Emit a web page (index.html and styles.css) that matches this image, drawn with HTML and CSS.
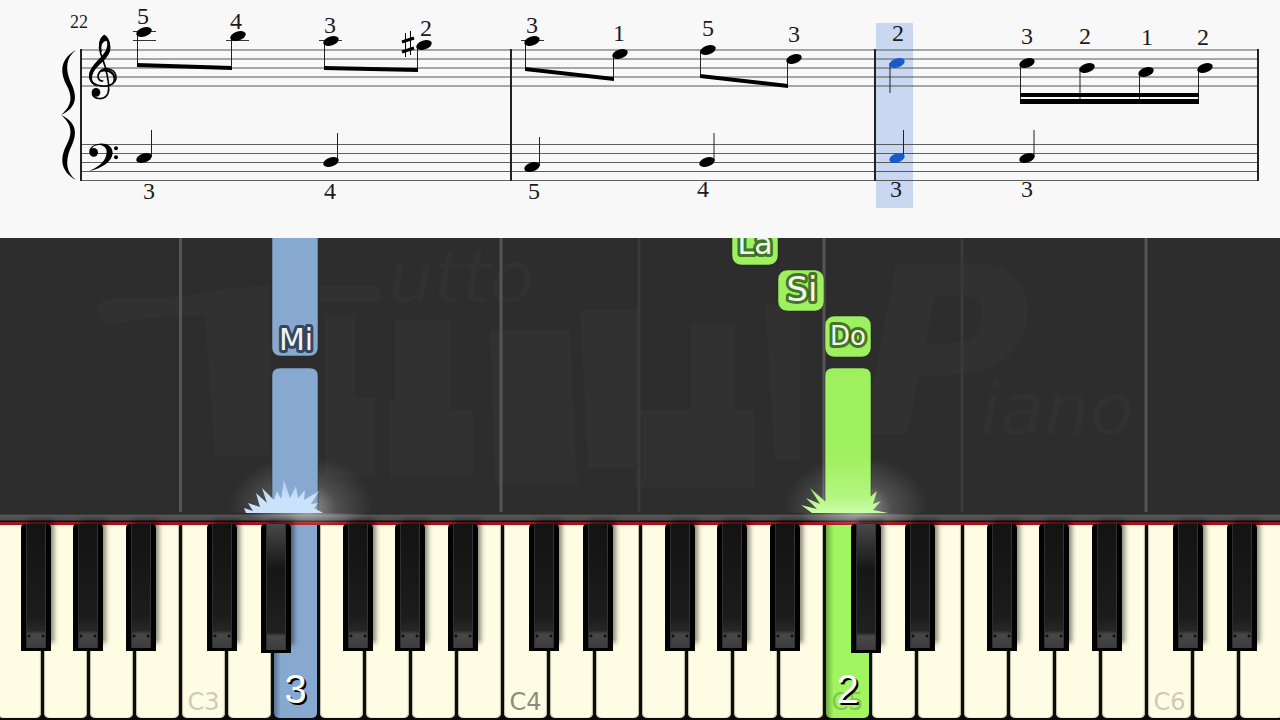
FILE: index.html
```html
<!DOCTYPE html>
<html lang="it">
<head>
<meta charset="utf-8">
<title>Tutto Piano</title>
<link rel="stylesheet" href="styles.css">
</head>
<body>
<main class="player">
<svg class="score" viewBox="0 0 1280 238" role="img" aria-label="Score, measure 22">
  <defs>
    <ellipse id="head" rx="8" ry="4.500" transform="rotate(-18)"/>
  </defs>
  <rect class="cursor" x="876" y="23" width="37" height="185"/>
  <path class="staff-treble" d="M80 50H1258M80 59H1258M80 68H1258M80 77H1258M80 86H1258"/>
  <path class="staff-bass" d="M80 144.500H1258M80 153.500H1258M80 162.500H1258M80 171.500H1258M80 180.500H1258"/>
  <path class="barline" d="M81 49V181M511 49V181M875 49V181M1258 49V181"/>
  <g transform="translate(50 10) scale(.33333)">
    <path d="M78 120C48 142 46 175 60 212C82 255 85 290 33 315C85 340 82 375 60 418C46 455 48 488 78 510C34 485 28 450 48 408C68 372 68 345 33 315C68 285 68 258 48 222C28 180 34 145 78 120Z"/>
    <circle cx="138" cy="247" r="13"/>
    <path class="clef-line" d="M127 252C132 268 164 273 174 250C181 230 173 200 166 172L152 130C145 106 150 86 163 77C177 86 182 108 175 125C160 155 120 170 120 200C121 234 190 240 198 206C200 176 164 168 149 186C138 202 147 214 160 213"/>
    <path d="M163 74C147 84 145 108 151 128L156 124C151 108 157 94 169 92C173 94 173 108 168 120C156 145 116 168 117 200C119 218 130 226 142 230C128 220 124 208 127 196C134 168 170 155 180 124C186 100 172 84 163 74Z"/>
    <path d="M149 187C160 170 193 177 196 203C196 216 188 224 178 228C192 218 193 205 187 195C178 183 160 182 149 187Z"/>
    <circle cx="131" cy="427" r="13"/>
    <path d="M118 425C118 396 188 388 188 429C186 456 154 475 117 484C150 468 169 452 170 426C170 402 137 399 126 415Z"/>
    <circle cx="198" cy="415" r="6"/><circle cx="198" cy="442" r="6"/>
  </g>
  <path class="ledger" d="M133 31.500H156M133 40.500H156M226 40.500H249M319 40.500H342M521 40.500H544"/>
  <path class="stem" d="M137.500 32V66M231.500 36V69M324.500 41V68M417.500 45V71M525.500 41V70M613.500 54V80M700.500 50V77M787.500 59V87M1020.500 63V102M1080 68V102M1139.500 72V102M1198.500 68V102M151.500 130V157M337.500 133V161M539.500 137V166M714 133V161M1034 130V157M903.500 130V157M890 63V93"/>
  <path d="M137 63L232 66V70L137 67ZM324 66L418 68V72L324 70ZM525 67L614 77V81L525 71ZM700 74L788 84V88L700 78ZM1020 93H1199V97H1020ZM1020 99H1199V104H1020Z"/>
  <path class="sharp-v" d="M405.500 33V57M410.500 31V55"/>
  <path class="sharp-h" d="M402 42L414 38M402 52L414 48"/>
  <g>
    <use href="#head" x="144" y="32"/><use href="#head" x="238" y="36"/><use href="#head" x="331" y="41"/><use href="#head" x="424" y="45"/>
    <use href="#head" x="532" y="41"/><use href="#head" x="620" y="54"/><use href="#head" x="708" y="50"/><use href="#head" x="794" y="59"/>
    <use href="#head" x="1027" y="63"/><use href="#head" x="1087" y="68"/><use href="#head" x="1146" y="72"/><use href="#head" x="1205" y="68"/>
    <use href="#head" x="144" y="158"/><use href="#head" x="331" y="162"/><use href="#head" x="532" y="167"/><use href="#head" x="707" y="162"/><use href="#head" x="1027" y="158"/>
  </g>
  <g class="current"><use href="#head" x="897" y="63"/><use href="#head" x="897" y="158"/></g>
  <text class="measure" x="79" y="28">22</text>
  <g class="finger">
    <text x="143" y="24">5</text><text x="236" y="29">4</text><text x="330" y="33">3</text><text x="426" y="36">2</text>
    <text x="532" y="33">3</text><text x="619" y="41">1</text><text x="708" y="36">5</text><text x="794" y="42">3</text>
    <text x="898" y="41">2</text><text x="1027" y="44">3</text><text x="1085" y="44">2</text><text x="1147" y="45">1</text><text x="1203" y="45">2</text>
    <text x="149" y="199">3</text><text x="330" y="199">4</text><text x="534" y="199">5</text><text x="703" y="197">4</text><text x="896" y="197">3</text><text x="1027" y="197">3</text>
  </g>
</svg>

<svg class="roll" viewBox="0 238 1280 275" role="img" aria-label="Falling notes">
  <defs>
    <radialGradient id="glow"><stop offset="0" stop-color="#fff" stop-opacity=".6"/><stop offset=".5" stop-color="#fff" stop-opacity=".16"/><stop offset="1" stop-color="#fff" stop-opacity="0"/></radialGradient>
    <linearGradient id="burstBlue" x1="0" y1="0" x2="0" y2="1"><stop offset="0" stop-color="#a9cdf0"/><stop offset=".6" stop-color="#cbe2fb"/></linearGradient>
    <linearGradient id="burstGreen" x1="0" y1="0" x2="0" y2="1"><stop offset="0" stop-color="#a6f070"/><stop offset="1" stop-color="#ccffa8"/></linearGradient>
    <linearGradient id="laneGreen" x1="0" y1="0" x2="0" y2="1"><stop offset=".6" stop-color="#9ff05f"/><stop offset="1" stop-color="#bcfa8c"/></linearGradient>
  </defs>
  <g class="watermark">
    <path d="M98 306Q100 298 125 298Q185 300 225 288L270 286V320Q180 310 108 325Q98 320 98 306ZM320 286H375Q384 290 380 302H320ZM205 315H270V455H215ZM325 315H355V398H375V477H325ZM395 320H450V410H473V477H390V400H395ZM490 330H570L577 485H495ZM580 310H639V468H588ZM691 325H735V410H754V487H635V410H691ZM765 305H800V460H775Z"/>
    <text class="mark-word" x="388" y="302">utto</text>
    <text class="mark-initial" x="858" y="435">P</text>
    <text class="mark-word" x="980" y="434">iano</text>
  </g>
  <path class="octave" d="M180.500 238V512M501 238V512M824 238V512M1146 238V512"/>
  <path class="octave-faint" d="M639 238V512M962 238V512"/>
  <ellipse cx="301" cy="508" rx="72" ry="52" fill="url(#glow)"/>
  <ellipse cx="856" cy="508" rx="72" ry="52" fill="url(#glow)"/>
  <g class="note left">
    <rect x="272" y="228" width="46" height="128" rx="8"/>
    <path d="M272 513V376Q272 368 280 368H310Q318 368 318 376V513Z"/>
  </g>
  <g class="note right">
    <rect x="732" y="224" width="46" height="41" rx="9"/>
    <rect x="778" y="270" width="46" height="41" rx="9"/>
    <rect x="825" y="316" width="46" height="41" rx="9"/>
    <path fill="url(#laneGreen)" d="M825 513V376Q825 368 833 368H863Q871 368 871 376V513Z"/>
  </g>
  <path fill="url(#burstBlue)" d="M246 513L244 508L253 511L248 503L260 507L256 493L267 503L262 488L274 500L277 491L281 499L284 480L290 498L296 486L298 498L305 490L304 500L319 491L311 504L318 503L314 508L323 513Z"/>
  <path fill="url(#burstGreen)" d="M812 513L801 505L817 509L806 498L820 504L810 488L826 502L827 496L834 503L839 494L844 502L849 493L854 503L861 495L863 503L877 491L873 504L881 501L873 510L888 513Z"/>
  <g class="solfege">
    <text class="on-blue" x="296" y="350">Mi</text>
    <text x="755" y="254">La</text>
    <text class="large" x="802" y="301">Si</text>
    <text class="small" x="848" y="345">Do</text>
  </g>
</svg>

<div class="rail"></div>

<div class="keyboard">
  <div class="slot"><button class="white" aria-label="F2"></button><button class="black f" aria-label="F♯2"></button></div>
  <div class="slot"><button class="white" aria-label="G2"></button><button class="black g" aria-label="G♯2"></button></div>
  <div class="slot"><button class="white" aria-label="A2"></button><button class="black a" aria-label="A♯2"></button></div>
  <div class="slot"><button class="white" aria-label="B2"></button></div>
  <div class="slot"><button class="white"><span class="name">C3</span></button><button class="black c" aria-label="C♯3"></button></div>
  <div class="slot"><button class="white" aria-label="D3"></button><button class="black d lit" aria-label="D♯3"></button></div>
  <div class="slot"><button class="white held-left"><span class="digit">3</span></button></div>
  <div class="slot"><button class="white" aria-label="F3"></button><button class="black f" aria-label="F♯3"></button></div>
  <div class="slot"><button class="white" aria-label="G3"></button><button class="black g" aria-label="G♯3"></button></div>
  <div class="slot"><button class="white" aria-label="A3"></button><button class="black a" aria-label="A♯3"></button></div>
  <div class="slot"><button class="white" aria-label="B3"></button></div>
  <div class="slot"><button class="white"><span class="name middle">C4</span></button><button class="black c" aria-label="C♯4"></button></div>
  <div class="slot"><button class="white" aria-label="D4"></button><button class="black d" aria-label="D♯4"></button></div>
  <div class="slot"><button class="white" aria-label="E4"></button></div>
  <div class="slot"><button class="white" aria-label="F4"></button><button class="black f" aria-label="F♯4"></button></div>
  <div class="slot"><button class="white" aria-label="G4"></button><button class="black g" aria-label="G♯4"></button></div>
  <div class="slot"><button class="white" aria-label="A4"></button><button class="black a" aria-label="A♯4"></button></div>
  <div class="slot"><button class="white" aria-label="B4"></button></div>
  <div class="slot"><button class="white held-right"><span class="name">C5</span><span class="digit">2</span></button><button class="black c lit" aria-label="C♯5"></button></div>
  <div class="slot"><button class="white" aria-label="D5"></button><button class="black d" aria-label="D♯5"></button></div>
  <div class="slot"><button class="white" aria-label="E5"></button></div>
  <div class="slot"><button class="white" aria-label="F5"></button><button class="black f" aria-label="F♯5"></button></div>
  <div class="slot"><button class="white" aria-label="G5"></button><button class="black g" aria-label="G♯5"></button></div>
  <div class="slot"><button class="white" aria-label="A5"></button><button class="black a" aria-label="A♯5"></button></div>
  <div class="slot"><button class="white" aria-label="B5"></button></div>
  <div class="slot"><button class="white"><span class="name">C6</span></button><button class="black c" aria-label="C♯6"></button></div>
  <div class="slot"><button class="white" aria-label="D6"></button><button class="black d" aria-label="D♯6"></button></div>
  <div class="slot"><button class="white" aria-label="E6"></button></div>
</div>
</main>
</body>
</html>
```

FILE: styles.css
```css
* { box-sizing: border-box; }
body { margin: 0; background: #0b0b0b; }

.player { display: flex; flex-direction: column; min-height: 100vh; overflow: hidden; }
.score, .roll { display: block; width: 100%; height: auto; flex: none; }

/* Score */
.score { background: #f8f8f8; }
.cursor { fill: #c9d8f0; }
.staff-treble { stroke: #555; stroke-opacity: .5; stroke-width: 2; }
.staff-bass { stroke: #444; stroke-opacity: .85; stroke-width: 1; }
.barline { stroke: #222; stroke-width: 2; }
.ledger { stroke: #333; stroke-width: 1; }
.stem { stroke: #222; stroke-width: 1; }
.clef-line { fill: none; stroke: #000; stroke-width: 5; }
.sharp-v { stroke: #000; stroke-width: 1; }
.sharp-h { stroke: #000; stroke-width: 3; }
.current { fill: #1959cc; }
.measure, .finger { font-family: "Liberation Serif", serif; fill: #1b1b22; text-anchor: middle; }
.measure { font-size: 18px; }
.finger { font-size: 24px; }

/* Falling notes */
.roll { background: #2d2d2d; }
.watermark { fill: #313131; }
.mark-word, .mark-initial { font-family: "DejaVu Sans", sans-serif; font-style: italic; }
.mark-word { font-size: 72px; }
.mark-initial { font-size: 236px; font-weight: bold; }
.octave { stroke: #555; stroke-width: 3; }
.octave-faint { stroke: #393939; stroke-width: 3; }
.left { fill: #88a9cf; }
.right { fill: #9ff05f; }
.note rect, .note path { stroke: #1d242a; stroke-opacity: .5; stroke-width: 1; }
.solfege { font-family: "DejaVu Sans", sans-serif; font-size: 30px; text-anchor: middle; fill: #f2f6ee; paint-order: stroke; stroke: #32601c; stroke-opacity: .85; stroke-width: 6px; stroke-linejoin: round; }
.solfege .on-blue { stroke: #24364e; }
.solfege .large { font-size: 34px; }
.solfege .small { font-size: 26px; }

/* Rail above the keys */
.rail {
  flex: none;
  height: 12px;
  background:
    radial-gradient(ellipse 60px 14px at 24% 0, #fff8, #fff0),
    radial-gradient(ellipse 60px 14px at 67% 0, #fff8, #fff0),
    linear-gradient(#292929 0 1px, #565656 2px, #4b4b4b 7px, #101010 8px 9px, #a5141c 9px 12px);
}

/* Keyboard */
.keyboard { flex: 1; display: flex; min-height: 195px; margin: 0 -4px; padding-bottom: 2px; background: #0b0b0b; }
.slot { position: relative; flex: 1; display: flex; padding: 0 1px 0 2px; }
button { appearance: none; border: 0; margin: 0; padding: 0; font: inherit; }
.white { flex: 1; min-width: 0; display: grid; align-items: end; justify-items: center; border-radius: 0 0 5px 5px; background: #fefde4; box-shadow: inset 1px 0 1px #b9b8a4, inset -1px 0 1px #b9b8a4; }
.held-left { background: linear-gradient(90deg, #577291, #88a9cf 16%); box-shadow: none; }
.held-right { background: linear-gradient(90deg, #6caa3f, #a2f560 18%); box-shadow: none; }
.name, .digit { grid-area: 1 / 1; }
.name { padding-bottom: 3px; font: 24px/26px "DejaVu Sans", sans-serif; color: #cdcbb7; }
.middle { color: #8d8b7e; }
.held-right .name { color: #83c64f; }
.digit { padding-bottom: 7px; font: 40px/44px "Liberation Sans", sans-serif; color: #fff; text-shadow: 2px 2px 0 #000; z-index: 1; }

/* Black keys overlap the white pair they sit between */
.black {
  position: absolute;
  z-index: 1;
  top: -1px;
  width: 65%;
  height: 66%;
  border: solid #030303;
  border-width: 0 5px 3px;
  border-radius: 4px 4px 0 0;
  background:
    radial-gradient(circle at 3px 112px, #111 1px, #0000 2px),
    radial-gradient(circle at 17px 112px, #111 1px, #0000 2px),
    linear-gradient(#131313, #1c1c1c 75%, #272727 86%, #484848 89%, #3c3c3c);
  box-shadow: inset 1px 0 #2e2e2e, inset -1px 0 #333, 5px -6px 5px -2px #0007;
}
.lit { height: 67%; background: linear-gradient(#484848, #161616 36%, #202020 86%, #484848 89%, #3c3c3c); }
.f { left: 54%; }
.g { left: 67%; }
.a { left: 83%; }
.c { left: 59%; }
.d { left: 76%; }
```
